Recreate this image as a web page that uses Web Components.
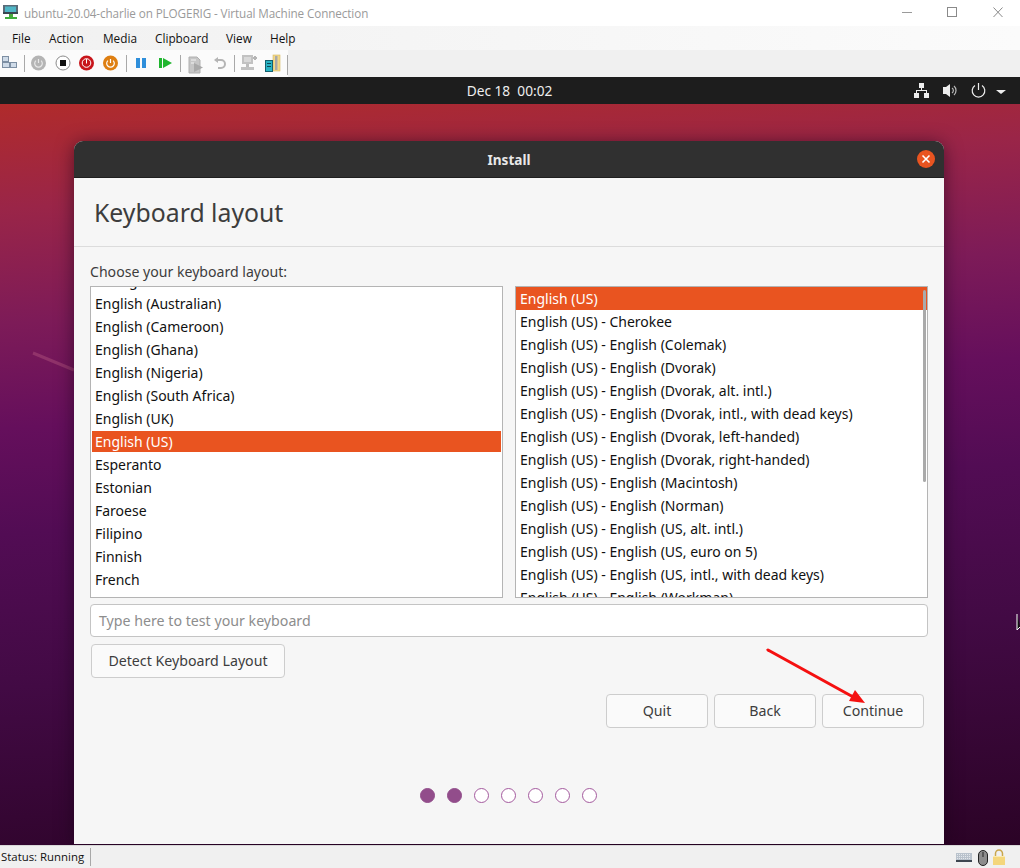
<!DOCTYPE html>
<html>
<head>
<meta charset="utf-8">
<title>Virtual Machine Connection</title>
<style>
html, body { margin: 0; padding: 0; height: 868px; overflow: hidden; background: #f0f0f0; }
</style>
</head>
<body>
<vm-window>
    <vm-titlebar slot="top">ubuntu-20.04-charlie on PLOGERIG - Virtual Machine Connection</vm-titlebar>
    <vm-menubar slot="top"></vm-menubar>
    <vm-toolbar slot="top"></vm-toolbar>
    <guest-screen>
        <gnome-topbar slot="bar">Dec 18&nbsp; 00:02</gnome-topbar>
        <installer-window title="Install" heading="Keyboard layout">
            <span slot="label">Choose your keyboard layout:</span>
            <kb-list slot="left" offset="18">
                <kb-row>Dzongkha</kb-row>
                <kb-row>English (Australian)</kb-row>
                <kb-row>English (Cameroon)</kb-row>
                <kb-row>English (Ghana)</kb-row>
                <kb-row>English (Nigeria)</kb-row>
                <kb-row>English (South Africa)</kb-row>
                <kb-row>English (UK)</kb-row>
                <kb-row selected inset>English (US)</kb-row>
                <kb-row>Esperanto</kb-row>
                <kb-row>Estonian</kb-row>
                <kb-row>Faroese</kb-row>
                <kb-row>Filipino</kb-row>
                <kb-row>Finnish</kb-row>
                <kb-row>French</kb-row>
                <kb-row>French (Canada)</kb-row>
            </kb-list>
            <kb-list slot="right" scrollbar>
                <kb-row selected>English (US)</kb-row>
                <kb-row>English (US) - Cherokee</kb-row>
                <kb-row>English (US) - English (Colemak)</kb-row>
                <kb-row>English (US) - English (Dvorak)</kb-row>
                <kb-row>English (US) - English (Dvorak, alt. intl.)</kb-row>
                <kb-row>English (US) - English (Dvorak, intl., with dead keys)</kb-row>
                <kb-row>English (US) - English (Dvorak, left-handed)</kb-row>
                <kb-row>English (US) - English (Dvorak, right-handed)</kb-row>
                <kb-row>English (US) - English (Macintosh)</kb-row>
                <kb-row>English (US) - English (Norman)</kb-row>
                <kb-row>English (US) - English (US, alt. intl.)</kb-row>
                <kb-row>English (US) - English (US, euro on 5)</kb-row>
                <kb-row>English (US) - English (US, intl., with dead keys)</kb-row>
                <kb-row>English (US) - English (Workman)</kb-row>
            </kb-list>
            <kb-button slot="detect" style="width:194px">Detect Keyboard Layout</kb-button>
            <kb-button slot="actions">Quit</kb-button>
            <kb-button slot="actions">Back</kb-button>
            <kb-button slot="actions">Continue</kb-button>
            <step-dots slot="steps" total="7" done="2"></step-dots>
        </installer-window>
    </guest-screen>
    <vm-status slot="bottom">Status: Running</vm-status>
</vm-window>

<script>
'use strict';

const UI_FONT = '"Noto Sans", "Open Sans", sans-serif';

function define(name, html, extra) {
    class El extends HTMLElement {
        constructor() {
            super();
            this.attachShadow({mode: 'open'});
            this.shadowRoot.innerHTML = typeof html === 'function' ? html(this) : html;
        }
        connectedCallback() {
            if (extra) extra(this);
        }
    }
    customElements.define(name, El);
}

define('vm-window', `
    <style>
        :host { display: flex; flex-direction: column; width: 1020px; height: 868px; overflow: hidden; }
        .main { flex: 1; min-height: 0; display: flex; flex-direction: column; }
    </style>
    <slot name="top"></slot>
    <div class="main"><slot></slot></div>
    <slot name="bottom"></slot>
`);

define('vm-titlebar', `
    <style>
        :host {
            display: flex; align-items: center; height: 26px; background: #fff;
            font: 11.7px/26px "Open Sans", "Noto Sans", sans-serif; color: #9a9a9a;
        }
        .icon { width: 24px; height: 26px; flex: none; }
        .text { flex: 1; white-space: nowrap; letter-spacing: -0.1px; padding-bottom: 1px; }
        .ctl { display: flex; height: 26px; }
        .ctl svg { display: block; }
    </style>
    <svg class="icon" viewBox="0 0 24 26">
        <rect x="3" y="5" width="15" height="9" fill="#5a6b78"/>
        <rect x="5" y="6.5" width="11" height="6" fill="#4fb6c6"/>
        <rect x="3" y="12" width="15" height="2" fill="#3a4650"/>
        <rect x="9" y="14" width="4" height="3" fill="#49a83c"/>
        <rect x="5" y="17" width="12" height="2" fill="#3fae3c"/>
    </svg>
    <span class="text"><slot></slot></span>
    <svg class="ctl" width="120" height="26" viewBox="900 0 120 26">
        <rect x="902" y="12" width="10" height="1" fill="#9a9a9a"/>
        <rect x="947.5" y="7.5" width="9" height="9" fill="none" stroke="#8a8a8a"/>
        <path d="M993.5 7.5l9 9.5M1002.5 7.5l-9 9.5" stroke="#8a8a8a" fill="none"/>
    </svg>
`);

define('vm-menubar', `
    <style>
        :host {
            display: flex; height: 24px; background: linear-gradient(90deg, #f1f1f1, #fbfbfb);
            font: 11.8px/25px "Open Sans", "Noto Sans", sans-serif; color: #111;
        }
        .m { margin-left: 12px; width: 37px; }
        .b { width: 54px; } .c { width: 52px; } .d { width: 71px; } .e { width: 44px; }
    </style>
    <div class="m">File</div><div class="b">Action</div><div class="c">Media</div><div class="d">Clipboard</div><div class="e">View</div><div>Help</div>
`);

const powerGlyph = (cx, color) => `<path d="M${cx - 2.6} 60.6a3.8 3.8 0 1 0 5.2 0M${cx} 59v4" fill="none" stroke="${color}" stroke-width="1.2"/>`;

define('vm-toolbar', `
    <style>
        :host { display: flex; height: 27px; background: #f0f0f0; }
        .strip { width: 288px; height: 27px; background: #fbfbfb; }
        svg { display: block; }
    </style>
    <div class="strip">
    <svg width="290" height="27" viewBox="0 50 290 27">
        <g fill="#cfdbe8" stroke="#7d8fa3" stroke-width="1">
            <rect x="2.5" y="56.5" width="6" height="5"/>
            <rect x="2.5" y="62.5" width="7" height="5"/>
            <rect x="10.5" y="62.5" width="6" height="5"/>
        </g>
        <g fill="#a8a8a8">
            <rect x="24" y="55" width="1" height="17"/>
            <rect x="126" y="55" width="1" height="17"/>
            <rect x="180" y="55" width="1" height="17"/>
            <rect x="234" y="55" width="1" height="17"/>
            <rect x="287" y="55" width="1" height="20"/>
        </g>
        <circle cx="38.500" cy="63" r="7.500" fill="#b4b4b4"/>
        ${powerGlyph(38.5, '#e8e8e8')}
        <circle cx="63" cy="63" r="7" fill="#fff" stroke="#8c8c8c"/>
        <rect x="60" y="60" width="6" height="6" fill="#111"/>
        <circle cx="86.500" cy="63" r="7.500" fill="#c8151b"/>
        <circle cx="86.500" cy="63" r="4.300" fill="none" stroke="#fff"/>
        <rect x="86" y="59" width="1" height="4.500" fill="#fff"/>
        <circle cx="110.500" cy="63" r="7.500" fill="#de7f12"/>
        ${powerGlyph(110.5, '#fff')}
        <rect x="136" y="58" width="4" height="10" fill="#2f8fdb"/>
        <rect x="142" y="58" width="4" height="10" fill="#2f8fdb"/>
        <rect x="159" y="58" width="3" height="10" fill="#1fb52e"/>
        <path d="M163 58l9 5-9 5z" fill="#1fb52e"/>
        <path d="M189 57h8l3 3v13h-11z" fill="#c6c6c6" stroke="#b0b0b0"/>
        <path d="M194 63l9 4.500-9 4.500z" fill="#a9a9a9"/>
        <path d="M191 60h5M191 63h3" stroke="#f2f2f2"/>
        <path d="M216 60h5a3.500 3.500 0 0 1 0 8h-3" fill="none" stroke="#b5b5b5" stroke-width="2"/>
        <path d="M214 60l4-3v6z" fill="#b5b5b5"/>
        <rect x="242" y="55" width="11" height="9" fill="#c2c2c2"/>
        <rect x="244" y="57" width="7" height="5" fill="#d9d9d9"/>
        <path d="M253 58h4M255 56v4" stroke="#b5b5b5" stroke-width="2"/>
        <rect x="246" y="64" width="3" height="3" fill="#bdbdbd"/>
        <rect x="241" y="67" width="13" height="3" fill="#c2c2c2"/>
        <rect x="273" y="55" width="7" height="16" fill="#f2d888" stroke="#d8b860" stroke-width=".6"/>
        <rect x="275" y="56" width="2.500" height="14" fill="#a9a9a9"/>
        <rect x="265.500" y="60.500" width="7" height="11" fill="#28b3c4" stroke="#14606e"/>
        <rect x="267" y="63" width="4" height="1" fill="#0e4a56"/>
        <rect x="267" y="66" width="4" height="1" fill="#0e4a56"/>
    </svg>
    </div>
`);

define('vm-status', `
    <style>
        :host {
            display: flex; align-items: center; height: 23px; background: #f0f0f0;
            border-top: 1px solid #d8d8d8; box-sizing: border-box; position: relative;
            font: 11.4px/22px "Open Sans", "Noto Sans", sans-serif; color: #111;
        }
        .text { width: 90px; padding-left: 1px; box-sizing: border-box; white-space: nowrap; }
        .sep { width: 1px; height: 18px; background: #a8a8a8; }
        .fill { flex: 1; }
        svg { display: block; }
    </style>
    <span class="text"><slot></slot></span>
    <span class="sep"></span>
    <span class="fill"></span>
    <svg width="70" height="22" viewBox="950 845 70 22">
        <rect x="956" y="852" width="16" height="9" fill="#b9c2cc"/>
        <path d="M957 853.500h14M957 855.500h14M957 857.500h14" stroke="#e4e8ec" stroke-dasharray="1 1"/>
        <rect x="956" y="859" width="16" height="2" fill="#3d4650"/>
        <rect x="978.500" y="849.500" width="9" height="15" rx="4.500" fill="#8c8c8c" stroke="#222"/>
        <rect x="982.500" y="851" width="1" height="5" fill="#222"/>
        <path d="M995.500 855v-2.500a3.500 3.500 0 0 1 7 0v2.500" fill="none" stroke="#c9a64c" stroke-width="1.500"/>
        <rect x="993" y="855" width="12" height="9" fill="#f4d67c"/>
        <rect x="993" y="855" width="12" height="1" fill="#fbeab0"/>
    </svg>
`);

define('guest-screen', `
    <style>
        :host { display: flex; flex-direction: column; flex: 1; min-height: 0; position: relative; overflow: hidden; }
        .desk {
            flex: 1; min-height: 0; display: flex; flex-direction: column; align-items: flex-start;
            padding: 37px 0 0 74px; position: relative; overflow: hidden;
            background: linear-gradient(176deg, #b02b2b 0, #9a2548 13%, #7d1b58 27%, #650f5c 40%, #520c54 53%, #420a44 72%, #2b0326 100%);
        }
        .streak { position: absolute; left: 0; top: 0; }
        .cursor { position: absolute; left: 1016px; top: 509px; }
    </style>
    <slot name="bar"></slot>
    <div class="desk">
        <svg class="streak" width="80" height="300">
            <path d="M33 249l41 17" stroke="#a84a78" stroke-opacity=".55" stroke-width="3"/>
        </svg>
        <slot></slot>
        <svg class="cursor" width="4" height="20"><path d="M1 1v16l3-3" fill="#111" stroke="#fff"/></svg>
    </div>
`);

define('gnome-topbar', `
    <style>
        :host {
            display: flex; align-items: center; justify-content: center; height: 27px; flex: none; position: relative;
            background: #1d1d1d; color: #eee; font: 400 13.7px/27px ${UI_FONT};
        }
        svg { position: absolute; left: 900px; top: 0; }
        .clock { margin-right: 1px; }
    </style>
    <span class="clock"><slot></slot></span>
    <svg width="120" height="27" viewBox="900 77 120 27">
        <g fill="#eee">
            <rect x="919" y="83" width="5" height="5"/>
            <rect x="914" y="93" width="5" height="5"/>
            <rect x="924" y="93" width="5" height="5"/>
            <path d="M921 88h1v2h5v3h-1v-2h-9v2h-1v-3h5z"/>
            <path d="M943 87h3l4-3v13l-4-3h-3z"/>
            <path d="M1001 92h-5l5 4 5-4z" transform="translate(0,-2)"/>
        </g>
        <path d="M952 88a3 3 0 0 1 0 5M954 86a6 6 0 0 1 0 9" fill="none" stroke="#bbb" stroke-width="1.200"/>
        <path d="M975 85.500a6.300 6.300 0 1 0 7 0M978.500 83v7" fill="none" stroke="#eee" stroke-width="1.200"/>
    </svg>
`);

define('installer-window', el => `
    <style>
        :host {
            display: block; width: 870px; height: 703px; flex: none; position: relative;
            border-radius: 9px 9px 0 0; background: #f6f6f6; box-shadow: 0 2px 18px rgba(20,0,20,.55);
            font: 14.2px/20px ${UI_FONT}; color: #3d3d3d;
        }
        .head {
            height: 37px; background: #303030; border-radius: 9px 9px 0 0; position: relative;
            border-bottom: 1px solid #1f1f1f; box-sizing: border-box; padding-top: 2px;
            display: flex; align-items: center; justify-content: center;
            color: #e8e8e8; font-weight: 700; font-size: 13.6px;
        }
        .head svg { position: absolute; right: 9px; top: 9px; }
        h1 {
            margin: 0; height: 68px; padding-left: 20px; border-bottom: 1px solid #dcdcdc; box-sizing: content-box;
            font: 400 24.8px/68px ${UI_FONT}; color: #3d3d3d;
        }
        .body { padding: 14px 16px 0; }
        .label { height: 25px; line-height: 21px; font-size: 14.1px; }
        .lists { display: grid; grid-template-columns: 413px 413px; column-gap: 12px; }
        .field {
            margin-top: 6px; height: 33px; border: 1px solid #c4c4c4; border-radius: 4px; background: #fff;
            box-sizing: border-box; padding-left: 8px; line-height: 31px; color: #8d8d8d;
        }
        .detect { margin: 7px 0 0 1px; }
        .actions { display: flex; justify-content: flex-end; gap: 6px; margin: 16px 4px 0 0; }
        .actions ::slotted(kb-button) { width: 102px; }
        .steps { display: flex; justify-content: flex-start; margin: 60px 0 0 330px; }
        .arrow { position: absolute; left: 690px; top: 505px; }
    </style>
    <div class="head">${el.getAttribute('title')}
        <svg width="18" height="18" viewBox="0 0 18 18">
            <circle cx="9" cy="9" r="9" fill="#e95420"/>
            <path d="M5.500 5.500l7 7M12.500 5.500l-7 7" stroke="#fff" stroke-width="1.600"/>
        </svg>
    </div>
    <h1>${el.getAttribute('heading')}</h1>
    <div class="body">
        <div class="label"><slot name="label"></slot></div>
        <div class="lists"><slot name="left"></slot><slot name="right"></slot></div>
        <div class="field">Type here to test your keyboard</div>
        <div class="detect"><slot name="detect"></slot></div>
        <div class="actions"><slot name="actions"></slot></div>
        <div class="steps"><slot name="steps"></slot></div>
    </div>
    <svg class="arrow" width="110" height="70" viewBox="690 505 110 70">
        <path d="M694 509 L781 557" stroke="#f51010" stroke-width="3" stroke-linecap="round"/>
        <path d="M791 562 L775 560 L781 549 Z" fill="#f51010"/>
    </svg>
`);

define('kb-list', el => `
    <style>
        :host {
            display: block; height: 312px; overflow: hidden; position: relative; background: #fff;
            border: 1px solid #b4b4b4; box-sizing: border-box; color: #111; font-size: 14px;
        }
        .rows { margin-top: -${el.getAttribute('offset') || 0}px; }
        .bar {
            position: absolute; right: 1px; top: 3px; width: 3px; height: 192px;
            background: #aaa; border-radius: 2px;
        }
    </style>
    <div class="rows"><slot></slot></div>
    ${el.hasAttribute('scrollbar') ? '<div class="bar"></div>' : ''}
`);

define('kb-row', `
    <style>
        :host {
            display: block; height: 23px; line-height: 23px; padding-left: 4px; white-space: nowrap;
            box-sizing: border-box;
        }
        :host([selected]) { background: #e95420; color: #fff; }
        :host([inset]) { background: linear-gradient(#e95420, #e95420) 1px 1px / calc(100% - 2px) 21px no-repeat; }
    </style>
    <slot></slot>
`);

define('kb-button', `
    <style>
        :host {
            display: block; height: 34px; box-sizing: border-box; text-align: center;
            border: 1px solid #cdcdcd; border-radius: 4px; background: #fafafa;
            line-height: 32px; color: #3d3d3d;
        }
    </style>
    <slot></slot>
`);

define('step-dots', el => {
    const total = +el.getAttribute('total');
    const done = +el.getAttribute('done');
    let dots = '';
    for (let i = 0; i < total; i++)
        dots += `<i class="${i < done ? 'on' : ''}"></i>`;
    return `
        <style>
            :host { display: flex; gap: 12px; }
            i {
                width: 15px; height: 15px; border-radius: 50%; box-sizing: border-box;
                border: 1px solid #a45a9e; background: #fff; display: block;
            }
            .on { background: #924d8b; border-color: #924d8b; }
        </style>
        ${dots}
    `;
});
</script>
</body>
</html>
